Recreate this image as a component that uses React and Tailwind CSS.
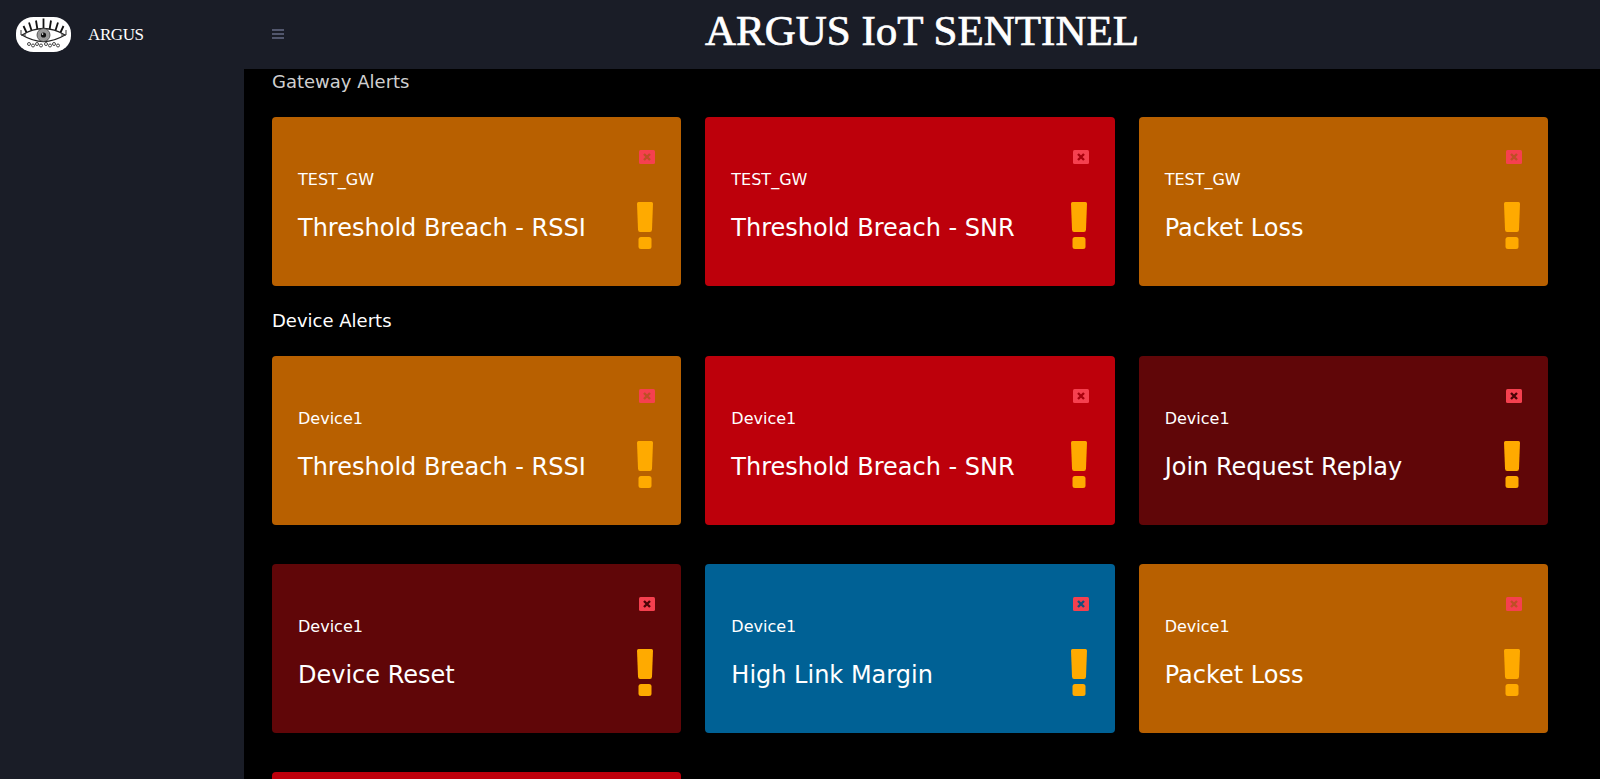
import React from 'react';

const colors = {
  orange: 'bg-[#b86000]',
  red: 'bg-[#bd000b]',
  dark: 'bg-[#600608]',
  blue: 'bg-[#006195]',
};

const closeColors = {
  orange: 'stroke-[#bd4f25]',
  red: 'stroke-[#a8000c]',
  dark: 'stroke-[#4a0406]',
  blue: 'stroke-[#14507c]',
};

const gatewayAlerts = [
  { name: 'TEST_GW', title: 'Threshold Breach - RSSI', color: 'orange' },
  { name: 'TEST_GW', title: 'Threshold Breach - SNR', color: 'red' },
  { name: 'TEST_GW', title: 'Packet Loss', color: 'orange' },
];

const deviceAlerts = [
  { name: 'Device1', title: 'Threshold Breach - RSSI', color: 'orange' },
  { name: 'Device1', title: 'Threshold Breach - SNR', color: 'red' },
  { name: 'Device1', title: 'Join Request Replay', color: 'dark' },
  { name: 'Device1', title: 'Device Reset', color: 'dark' },
  { name: 'Device1', title: 'High Link Margin', color: 'blue' },
  { name: 'Device1', title: 'Packet Loss', color: 'orange' },
  { name: 'Device1', title: 'Threshold Breach - SNR', color: 'red' },
];

const rays = [
  [27.5, 12, 27.5, 1.5],
  [21.5, 13, 20, 3.5],
  [33.5, 13, 35, 3.5],
  [16, 15, 13, 5.5],
  [39, 15, 42, 5.5],
  [11.5, 17.5, 7.5, 9],
  [43.5, 17.5, 47.5, 9],
];

const Logo = () => (
  <svg width="55" height="35" viewBox="0 0 55 35" className="shrink-0">
    <rect x="0" y="0" width="55" height="35" rx="17.5" ry="16" fill="#fff" />
    {rays.map(([x1, y1, x2, y2], i) => (
      <line key={i} x1={x1} y1={y1} x2={x2} y2={y2} stroke="#111" strokeWidth="1.8" />
    ))}
    <path d="M6 18 Q27.5 5 49 18 Q27.5 31 6 18Z" fill="#fff" stroke="#222" strokeWidth="1.3" />
    <path d="M5 13 V18 H10 M50 13 V18 H45" fill="none" stroke="#333" strokeWidth="1" />
    <circle cx="27.5" cy="18" r="6.5" fill="#999" stroke="#444" strokeWidth="0.8" />
    <circle cx="27.5" cy="18" r="2.6" fill="#111" />
    <circle cx="26.6" cy="17.1" r="0.8" fill="#fff" />
    {[13, 17, 21, 25, 30, 34, 38, 42].map((x, i) => (
      <circle key={x} cx={x} cy={i % 2 ? 28.5 : 27} r="1.5" fill="none" stroke="#333" strokeWidth="0.9" />
    ))}
  </svg>
);

const CloseIcon = ({ color }) => (
  <svg width="16" height="14" viewBox="0 0 16 14" className="block">
    <rect width="16" height="14" rx="1.5" fill="#f5404f" />
    <path d="M5 4 L11 10 M11 4 L5 10" className={closeColors[color]} strokeWidth="2.4" />
  </svg>
);

const Exclaim = () => (
  <svg width="16" height="47" viewBox="0 0 16 47" className="block mr-[2px]">
    <path d="M1.5 0 H14.5 Q16 0 16 1.5 L15 27.5 Q14.9 30 12.9 30 H3.1 Q1.1 30 1 27.5 L0 1.5 Q0 0 1.5 0Z" fill="#ffaa00" />
    <rect x="1.5" y="35" width="13" height="12" rx="2.5" fill="#ffaa00" />
  </svg>
);

const AlertCard = ({ name, title, color }) => (
  <div className={`h-[169px] rounded-[4px] ${colors[color]} px-[26px] py-[33px] flex justify-between text-white`}>
    <div className="pt-[18px]">
      <div className="text-[16px] leading-6">{name}</div>
      <div className="mt-[18px] text-[24px] leading-9">{title}</div>
    </div>
    <div className="flex flex-col items-end gap-[38px]">
      <CloseIcon color={color} />
      <Exclaim />
    </div>
  </div>
);

const App = () => (
  <div className="flex h-screen overflow-hidden bg-black font-['DejaVu_Sans',sans-serif]">
    <aside className="w-[244px] shrink-0 bg-[#1a1d27]">
      <div className="h-[68px] flex items-center pl-[16px] gap-[17px]">
        <Logo />
        <span className="font-['Liberation_Serif',serif] text-[17px] leading-none tracking-[-0.4px] text-white">ARGUS</span>
      </div>
    </aside>
    <div className="flex-1 min-w-0 flex flex-col">
      <header className="h-[69px] shrink-0 bg-[#1a1d27] grid grid-cols-[1fr_auto_1fr] items-center px-[28px]">
        <svg width="12" height="10" viewBox="0 0 12 10" className="block mb-[2px]">
          <path d="M0 1 H12 M0 5 H12 M0 9 H12" stroke="#8a92b4" strokeWidth="1" />
        </svg>
        <h1 className="font-['Liberation_Serif',serif] text-[43px] leading-none text-white pb-[8px] [-webkit-text-stroke:0.7px_white]">
          ARGUS IoT SENTINEL
        </h1>
        <div />
      </header>
      <main className="flex-1 overflow-hidden pl-[28px] pr-[52px]">
        <h2 className="pt-[1px] text-[18px] leading-6 text-[#cfcfcf]">Gateway Alerts</h2>
        <div className="mt-[23px] grid grid-cols-3 gap-x-[24px]">
          {gatewayAlerts.map((a, i) => (
            <AlertCard key={i} {...a} />
          ))}
        </div>
        <h2 className="mt-[23px] text-[18px] leading-6 text-white">Device Alerts</h2>
        <div className="mt-[23px] grid grid-cols-3 gap-x-[24px] gap-y-[39px]">
          {deviceAlerts.map((a, i) => (
            <AlertCard key={i} {...a} />
          ))}
        </div>
      </main>
    </div>
  </div>
);

export default App;
